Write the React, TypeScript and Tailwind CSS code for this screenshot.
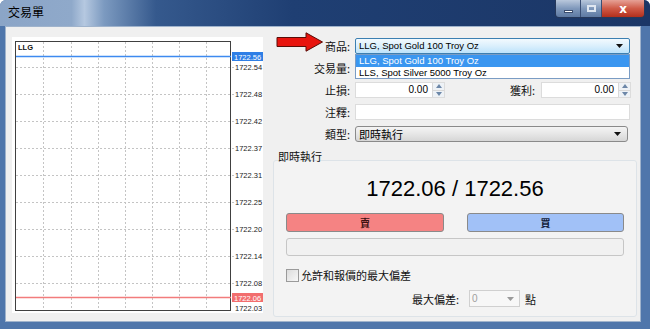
import React from 'react';

const cjk = "font-['Noto_Sans_CJK_TC','Liberation_Sans',sans-serif]";
const latin = "font-['Liberation_Sans','Noto_Sans_CJK_TC',sans-serif]";

const gridY = [30, 57, 84, 111, 138, 165, 192, 219, 246];
const gridLabels = ['1722.54', '1722.48', '1722.42', '1722.37', '1722.31', '1722.25', '1722.20', '1722.14', '1722.08'];
const gridX = [31, 59, 86, 113, 140, 167, 194];

function Chart() {
  return (
    <div className="w-[251px] h-[276px] bg-white shrink-0">
      <svg width="251" height="276" viewBox="0 0 251 276" fontFamily="Liberation Sans, sans-serif">
        {gridY.map((y) => (
          <line key={'h' + y} x1="4" x2="222" y1={y + 0.5} y2={y + 0.5} stroke="#c4c4c4" strokeDasharray="2 2" />
        ))}
        {gridX.map((x) => (
          <line key={'v' + x} x1={x + 0.5} x2={x + 0.5} y1="5" y2="273" stroke="#c4c4c4" strokeDasharray="2 2" />
        ))}
        <rect x="3.5" y="4.5" width="215" height="269" fill="none" stroke="#404040" />
        <text x="6" y="13" fontSize="7.5" fontWeight="bold" fill="#111">LLG</text>
        {/* ask line */}
        <line x1="4" x2="219" y1="19.5" y2="19.5" stroke="#3d8af0" strokeWidth="1.5" />
        <rect x="220" y="15" width="31" height="9" fill="#2f7fe6" />
        <text x="222" y="22.5" fontSize="7.5" fill="#fff">1722.56</text>
        {/* bid line */}
        <line x1="4" x2="219" y1="260.5" y2="260.5" stroke="#f27c7c" strokeWidth="1.5" />
        <rect x="220" y="256" width="31" height="9" fill="#f26e6e" />
        <text x="222" y="263.5" fontSize="7.5" fill="#fff">1722.06</text>
        {gridY.map((y, i) => (
          <text key={'t' + y} x="223" y={y + 3} fontSize="7.5" fill="#222">{gridLabels[i]}</text>
        ))}
        <text x="223" y="274" fontSize="7.5" fill="#222">1722.03</text>
      </svg>
    </div>
  );
}

function Spinner() {
  return (
    <div className="w-[12px] h-full flex flex-col border-l border-[#d8d8d8] bg-[#eef2f6]">
      <div className="flex-1 flex items-center justify-center border-b border-[#d8d8d8]">
        <svg width="6" height="4" viewBox="0 0 6 4"><path d="M0 4 L3 0 L6 4 Z" fill="#6c87a8" /></svg>
      </div>
      <div className="flex-1 flex items-center justify-center">
        <svg width="6" height="4" viewBox="0 0 6 4"><path d="M0 0 L3 4 L6 0 Z" fill="#6c87a8" /></svg>
      </div>
    </div>
  );
}

function NumberBox() {
  return (
    <div className="w-[90px] h-4 bg-white border border-[#dcdcdc] flex items-stretch">
      <div className={`flex-1 text-right pr-1 text-[10px] leading-[14px] text-black ${latin}`}>0.00</div>
      <Spinner />
    </div>
  );
}

function Caret({ color = '#111' }: { color?: string }) {
  return (
    <svg width="7" height="4" viewBox="0 0 7 4"><path d="M0 0 L7 0 L3.5 4 Z" fill={color} /></svg>
  );
}

function Label({ children }: { children: React.ReactNode }) {
  return (
    <div className={`w-[85px] shrink-0 text-right pr-[5px] text-[11px] leading-4 text-[#111] ${cjk}`}>{children}</div>
  );
}

export default function App() {
  return (
    <div className="w-[650px] h-[330px] bg-white">
      <div className="w-[650px] h-[329px] flex flex-col bg-[#4f76ab] rounded-t-[6px] overflow-hidden">
        {/* title bar */}
        <div className="h-[26px] flex items-start relative bg-[linear-gradient(90deg,#8ba5c7_0%,#8fa9ca_11%,#b5c8e0_13%,#7c9ac0_16%,#35598d_24%,#1f3f73_45%,#1b3666_100%)]">
          <div className={`pl-2 pt-[4px] text-[12px] leading-4 text-black ${cjk}`}>交易單</div>
          <div className="ml-auto mr-[5px] flex h-[18px] rounded-b-[4px] overflow-hidden border border-t-0 border-[#26385a]">
            <div className="w-[25px] flex items-center justify-center bg-[linear-gradient(180deg,#b9c8dc,#7f98bb_50%,#5e7aa3)] border-r border-[#3a4f75]">
              <div className="w-[9px] h-[3px] bg-white border border-[#3b4d6e] mt-[5px]" />
            </div>
            <div className="w-[21px] flex items-center justify-center bg-[linear-gradient(180deg,#b9c8dc,#7f98bb_50%,#5e7aa3)] border-r border-[#3a4f75]">
              <div className="w-[9px] h-[7px] border-2 border-[#dfe7f1]" />
            </div>
            <div className="w-[42px] flex items-center justify-center bg-[linear-gradient(180deg,#e6a196,#cf5a47_50%,#b22f1c)]">
              <span className="text-white font-bold text-[12px] leading-none font-['DejaVu_Sans',sans-serif]">x</span>
            </div>
          </div>
        </div>
        {/* client */}
        <div className="flex-1 flex pl-[5px] pr-[9px] pb-[7px]">
          <div className="flex-1 bg-[#f0f0f0] border border-[#9fb3cc] flex pl-[6px] pt-[10px] pr-[3px]">
            <Chart />
            <div className="flex-1 ml-[7px] flex flex-col">
              {/* form */}
              <div className="flex flex-col gap-[6px] pt-[1px] pr-[6px]">
                <div className="flex items-center relative">
                  <div className="w-[85px] shrink-0 flex items-center justify-end pr-[5px]">
                    <svg width="48" height="20" viewBox="0 0 48 20" className="mr-[1px] -mt-[8px]">
                      <path d="M1 5.5 L30 5.5 L30 0.8 L46.5 10 L30 19.2 L30 14.5 L1 14.5 Z" fill="#e8140e" stroke="#5a0d08" strokeWidth="1" />
                    </svg>
                    <span className={`text-[11px] leading-4 text-[#111] ${cjk}`}>商品:</span>
                  </div>
                  <div className="w-[275px] h-4 border border-[#3c7fb1] rounded-[2px] bg-[linear-gradient(180deg,#f3fafe,#daeffc_50%,#bde3fb)] flex items-center pl-[3px] pr-[6px]">
                    <span className={`flex-1 text-[9.5px] leading-[14px] text-black ${latin}`}>LLG, Spot Gold 100 Troy Oz</span>
                    <Caret />
                  </div>
                  <div className="absolute left-[85px] top-4 w-[275px] bg-white border border-[#7a9cc4] z-10 flex flex-col">
                    <div className={`h-[12px] pl-[3px] bg-[#3a96f0] text-white text-[9.5px] leading-[12px] ${latin}`}>LLG, Spot Gold 100 Troy Oz</div>
                    <div className={`h-[11px] pl-[3px] text-black text-[9.5px] leading-[11px] ${latin}`}>LLS, Spot Silver 5000 Troy Oz</div>
                  </div>
                </div>
                <div className="flex items-center">
                  <Label>交易量:</Label>
                  <div className="w-[275px] h-4 bg-white border border-[#dcdcdc]" />
                </div>
                <div className="flex items-center">
                  <Label>止損:</Label>
                  <NumberBox />
                  <span className={`ml-[65px] text-[11px] leading-4 text-[#111] ${cjk}`}>獲利:</span>
                  <div className="ml-auto">
                    <NumberBox />
                  </div>
                </div>
                <div className="flex items-center">
                  <Label>注釋:</Label>
                  <div className="w-[275px] h-4 bg-white border border-[#dcdcdc]" />
                </div>
                <div className="flex items-center">
                  <Label>類型:</Label>
                  <div className="w-[273px] h-4 border border-[#8a8a8a] rounded-[3px] bg-[linear-gradient(180deg,#f4f4f4,#e6e6e6_50%,#d6d6d6)] flex items-center pl-[3px] pr-[6px]">
                    <span className={`flex-1 text-[11px] leading-[14px] text-black ${cjk}`}>即時執行</span>
                    <Caret />
                  </div>
                </div>
              </div>
              {/* group */}
              <div className={`relative z-10 mt-[8px] pl-[8px] text-[11px] leading-[12px] text-[#111] ${cjk}`}>即時執行</div>
              <div className="mt-[-2px] ml-[3px] mb-[4px] flex-1 border border-[#dde3e8] rounded-[3px] bg-[#f3f3f3] flex flex-col px-[12px]">
                <div className={`mt-[16px] text-center text-[22px] leading-[24px] text-black ${latin}`}>1722.06 / 1722.56</div>
                <div className="mt-[12px] flex justify-between">
                  <div className="w-[158px] h-[19px] rounded-[3px] border border-[#8a8a8a] bg-[#f58383] flex items-center justify-center">
                    <span className={`text-[10px] leading-none text-[#3a1010] font-bold ${cjk}`}>賣</span>
                  </div>
                  <div className="w-[157px] h-[19px] rounded-[3px] border border-[#8a8a8a] bg-[#a1c1f7] flex items-center justify-center">
                    <span className={`text-[10px] leading-none text-[#101a3a] font-bold ${cjk}`}>買</span>
                  </div>
                </div>
                <div className="mt-[6px] h-[18px] rounded-[3px] border border-[#c6c6c6] bg-[#f1f1f1]" />
                <div className="mt-[11px] flex items-center">
                  <div className="w-[13px] h-[13px] border border-[#9a9a9a] bg-[linear-gradient(135deg,#dcdcdc,#f7f7f7)]" />
                  <span className={`ml-[2px] text-[11px] leading-4 text-[#111] ${cjk}`}>允許和報價的最大偏差</span>
                </div>
                <div className="mt-[7px] flex items-center pl-[126px]">
                  <span className={`text-[11px] leading-4 text-[#111] ${cjk}`}>最大偏差:</span>
                  <div className="ml-[10px] w-[51px] h-[17px] border border-[#d0d0d0] bg-[#f7f7f7] flex items-center pl-[2px] pr-[5px]">
                    <span className={`flex-1 text-[10px] leading-[14px] text-[#a0a0a0] ${latin}`}>0</span>
                    <Caret color="#9a9a9a" />
                  </div>
                  <span className={`ml-[5px] text-[11px] leading-4 text-[#111] ${cjk}`}>點</span>
                </div>
              </div>
            </div>
          </div>
        </div>
      </div>
    </div>
  );
}
